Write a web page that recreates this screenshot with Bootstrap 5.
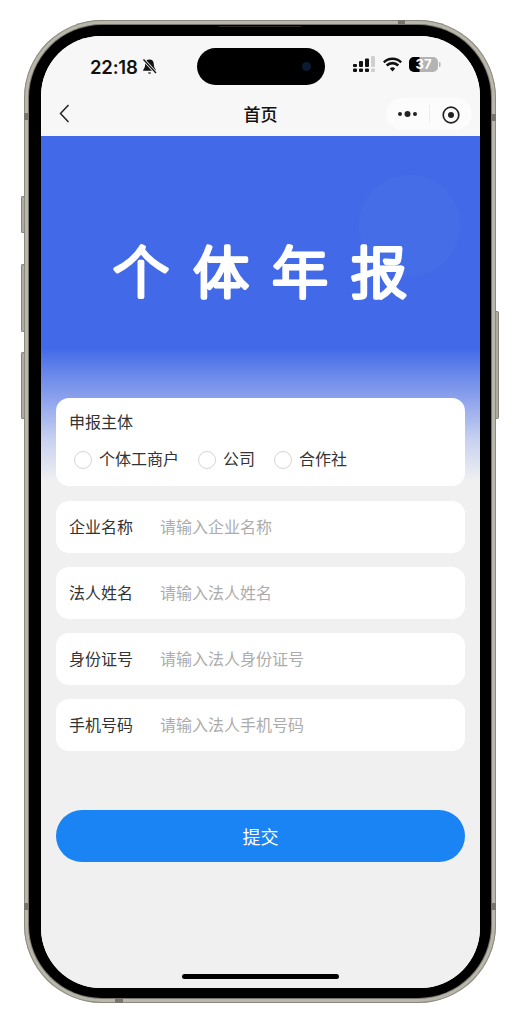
<!DOCTYPE html>
<html lang="zh">
<head>
<meta charset="utf-8">
<title>个体年报</title>
<link href="https://cdn.jsdelivr.net/npm/bootstrap@5.3.0/dist/css/bootstrap.min.css" rel="stylesheet">
<style>
html,body{height:1024px;overflow:hidden;background:#fff;}
body{font-family:"Liberation Sans","Noto Sans CJK SC",sans-serif;}
.stage{padding:20px 25px 21px 24px;height:1024px;}
.shell{position:relative;height:983px;border-radius:78px;background:#b9b7ac;padding:5px;box-shadow:inset 0 0 0 1px #8b897e;}
.frame{height:973px;border-radius:73px;background:#000;padding:11px 11px 10px 12px;box-sizing:border-box;box-shadow:0 0 0 1px #77756b;position:relative;}
.speaker{position:absolute;left:190px;right:190px;top:1px;height:1px;background:#2a2a2a;}
.display{height:100%;border-radius:60px;overflow:hidden;background:#f0f0f0;display:flex;flex-direction:column;position:relative;}
.keyside{position:absolute;width:3px;left:-3px;background:#aeaca1;border:1px solid #85837a;border-right:0;border-radius:2px 0 0 2px;}
.key1{top:176px;height:37px}.key2{top:244px;height:68px}.key3{top:332px;height:67px}
.keyright{position:absolute;width:3px;right:-3px;top:291px;height:108px;background:#aeaca1;border:1px solid #85837a;border-left:0;border-radius:0 2px 2px 0;}
.band{position:absolute;background:#77756c;}
.bl1{left:0;top:93px;width:5px;height:7px}.br1{right:0;top:94px;width:5px;height:7px}
.bl2{left:0;top:883px;width:5px;height:7px}.br2{right:0;top:883px;width:5px;height:7px}
.bt{left:374px;top:0;width:7px;height:5px}.bb{left:91px;bottom:0;width:8px;height:5px}
.topzone{height:100px;background:#f7f7f7;flex:none;}
.statusline{height:50px;padding:12px 39px 0 49px;}
.clock{font:600 18.5px/36px Inter,"Liberation Sans",sans-serif;color:#111;width:47px;letter-spacing:-.2px;margin-top:1px;}
.island{position:absolute;left:156px;top:12px;width:128px;height:37px;border-radius:19px;background:#000;}
.lens{position:absolute;right:14px;top:14px;width:9px;height:9px;border-radius:50%;background:#0c1a33;}
.navline{height:50px;padding:5px 8px 0 18px;position:relative;}
.navtitle{position:absolute;left:0;right:0;top:16px;text-align:center;font-size:17px;font-weight:500;line-height:24px;color:#111;font-family:"Noto Sans CJK SC",sans-serif;}
.capsule{width:86px;height:32px;border-radius:16px;background:#fcfcfc;position:relative;}
.capsule i{display:block;position:absolute;left:43px;top:7px;width:1px;height:18px;background:#ececec;}
.pageflow{flex:1;position:relative;overflow:hidden;padding:0 15px;background:linear-gradient(#4169e8 0,#4169e8 212px,#6a88ea 238px,#8ea3ec 264px,#c8d2f0 304px,#f0f0f0 345px);}
.orb{position:absolute;left:318px;top:39px;width:101px;height:101px;border-radius:50%;background:rgba(255,255,255,.03);}
.bigtitle{height:262px;margin:0;padding-top:106px;position:relative;}
.bigtitle svg{display:block;margin:0 auto;overflow:visible;}
.bigtitle text{font-family:"Noto Sans CJK SC",sans-serif;font-size:56px;font-weight:300;fill:#fff;stroke:#fff;stroke-width:4px;stroke-linejoin:round;stroke-linecap:round;text-anchor:middle;}
.sheet{background:#fff;border-radius:13px;color:#333;font:16px/24px "Noto Sans CJK SC",sans-serif;border:0;}
.choosebox{height:88px;padding:11px 13px;margin-bottom:15px;}
.choosehead{margin-bottom:13px;}
.choice{display:flex;align-items:center;margin:0;padding:0;}
.choice .form-check-input{width:18px;height:18px;margin:3px 7px 0 0;float:none;border:1px solid #d5d5d5;flex:none;}
.fieldbox{height:52px;margin-bottom:14px;padding:0 13px;}
.fieldname{width:91px;flex:none;color:#333;line-height:24px;margin:-2px 0 0;}
.fieldbox .form-control{border:0;padding:0;margin-top:-2px;background:transparent;box-shadow:none;font:16px/24px "Noto Sans CJK SC",sans-serif;color:#333;border-radius:0;}
.fieldbox .form-control::placeholder{color:#acacac;}
.sendbtn{margin-top:59px;height:52px;border-radius:26px;background:#1b84f5;border:0;font:18px/50px "Noto Sans CJK SC",sans-serif;padding:0;color:#fff;}
.homebar{position:absolute;left:141px;bottom:9px;width:157px;height:5px;border-radius:3px;background:#000;}
</style>
</head>
<body>
<div class="stage">
 <div class="shell">
  <span class="keyside key1"></span>
  <span class="keyside key2"></span>
  <span class="keyside key3"></span>
  <span class="keyright"></span>
  <span class="band bl1"></span><span class="band br1"></span><span class="band bl2"></span><span class="band br2"></span><span class="band bt"></span><span class="band bb"></span>
  <div class="frame">
   <span class="speaker"></span>
   <div class="display">
    <div class="topzone">
     <div class="statusline d-flex align-items-start">
      <span class="clock">22:18</span>
      <svg class="ms-1" style="margin-top:10px" width="17" height="17" viewBox="0 0 17 17"><path d="M8.5 1.5c-2.8 0-4.3 2-4.3 4.6 0 3-1 4.6-2 5.6v1h12.600v-1c-1-1-2-2.600-2-5.600 0-2.600-1.500-4.600-4.300-4.600z" fill="#111"/><path d="M6.800 14.500a1.800 1.800 0 0 0 3.400 0z" fill="#111"/><path d="M2.500 1.500 15 15" stroke="#f7f7f7" stroke-width="3"/><path d="M2.500 1.500 15 15" stroke="#111" stroke-width="1.300"/></svg>
      <div class="island"><span class="lens"></span></div>
      <div class="ms-auto d-flex align-items-center" style="gap:7px;margin-top:8px">
       <svg width="23" height="16" viewBox="0 0 23 16"><g fill="#111"><rect x="0" y="8" width="4" height="3" rx="1"/><rect x="0" y="12.500" width="4" height="3.500" rx="1"/><rect x="6" y="5" width="4" height="6" rx="1"/><rect x="6" y="12.500" width="4" height="3.500" rx="1"/><rect x="12" y="2.500" width="4" height="8.500" rx="1"/><rect x="12" y="12.500" width="4" height="3.500" rx="1"/></g><g fill="#cfcfcf"><rect x="18" y="0" width="4" height="11" rx="1"/><rect x="18" y="12.500" width="4" height="3.500" rx="1"/></g></svg>
       <svg width="19" height="15" viewBox="0 0 19 15"><path d="M9.500 14.500 6.800 11.600a3.800 3.800 0 0 1 5.400 0zM4.700 9.500 2.800 7.500a9.500 9.500 0 0 1 13.400 0l-1.900 2a6.800 6.800 0 0 0-9.600 0zM1.700 6.300 0 4.400a13.500 13.500 0 0 1 19 0l-1.700 1.900a11 11 0 0 0-15.600 0z" fill="#111"/></svg>
       <div class="d-flex align-items-center">
        <svg width="32" height="15" viewBox="0 0 32 15"><defs><clipPath id="lvl"><rect x="0" y="0" width="10.500" height="15"/></clipPath></defs><rect x="0" y="0" width="29" height="15" rx="5" fill="#b4b4b4"/><rect x="0" y="0" width="29" height="15" rx="5" fill="#000" clip-path="url(#lvl)"/><rect x="30" y="5" width="1.500" height="5" rx=".7" fill="#b4b4b4"/><text x="14.500" y="12" text-anchor="middle" font-family="Inter,Liberation Sans,sans-serif" font-size="13" font-weight="700" fill="#fff">37</text></svg>
       </div>
      </div>
     </div>
     <nav class="navline d-flex align-items-center justify-content-between">
      <svg width="11" height="19" viewBox="0 0 11 19"><path d="M9.500 1 1.500 9.500l8 8.500" fill="none" stroke="#222" stroke-width="1.500"/></svg>
      <span class="navtitle">首页</span>
      <div class="capsule">
       <svg class="position-absolute" style="left:11px;top:11px" width="21" height="10" viewBox="0 0 21 10"><circle cx="3" cy="5" r="2" fill="#222"/><circle cx="10.500" cy="5" r="3" fill="#222"/><circle cx="18" cy="5" r="2" fill="#222"/></svg>
       <i></i>
       <svg class="position-absolute" style="left:56px;top:8px" width="18" height="18" viewBox="0 0 18 18"><circle cx="9" cy="9" r="7.800" fill="none" stroke="#222" stroke-width="1.700"/><circle cx="9" cy="9" r="3" fill="#222"/></svg>
      </div>
     </nav>
    </div>
    <main class="pageflow">
     <span class="orb"></span>
     <h1 class="bigtitle"><svg width="296" height="62" viewBox="0 0 296 62"><text x="28" y="51">个</text><text x="108" y="51">体</text><text x="187" y="51">年</text><text x="266" y="51">报</text></svg></h1>
     <form>
      <div class="sheet choosebox">
       <div class="choosehead">申报主体</div>
       <div class="d-flex" style="gap:19px;padding-left:5px">
        <label class="form-check choice"><input class="form-check-input" type="radio" name="kind"><span>个体工商户</span></label>
        <label class="form-check choice"><input class="form-check-input" type="radio" name="kind"><span>公司</span></label>
        <label class="form-check choice"><input class="form-check-input" type="radio" name="kind"><span>合作社</span></label>
       </div>
      </div>
      <div class="sheet fieldbox d-flex align-items-center"><label class="fieldname">企业名称</label><input class="form-control" placeholder="请输入企业名称"></div>
      <div class="sheet fieldbox d-flex align-items-center"><label class="fieldname">法人姓名</label><input class="form-control" placeholder="请输入法人姓名"></div>
      <div class="sheet fieldbox d-flex align-items-center"><label class="fieldname">身份证号</label><input class="form-control" placeholder="请输入法人身份证号"></div>
      <div class="sheet fieldbox d-flex align-items-center"><label class="fieldname">手机号码</label><input class="form-control" placeholder="请输入法人手机号码"></div>
      <button type="button" class="btn btn-primary w-100 d-block sendbtn">提交</button>
     </form>
     <span class="homebar"></span>
    </main>
   </div>
  </div>
 </div>
</div>
<script src="https://cdn.jsdelivr.net/npm/bootstrap@5.3.0/dist/js/bootstrap.bundle.min.js"></script>
</body>
</html>
